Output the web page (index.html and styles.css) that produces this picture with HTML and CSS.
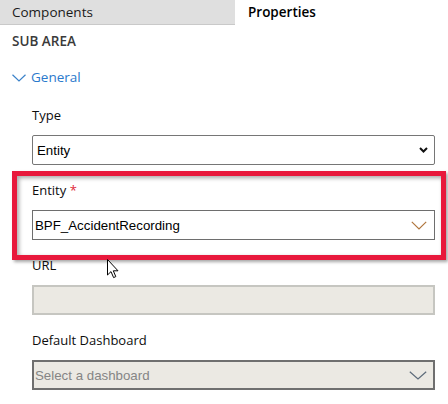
FILE: index.html
```html
<!DOCTYPE html>
<html>
<head>
<meta charset="utf-8">
<link rel="stylesheet" href="styles.css">
</head>
<body>
<div class="page">
  <div class="tabs">
    <div class="tab tab-inactive">Components</div>
    <div class="tab tab-active">Properties</div>
  </div>
  <div class="heading">SUB AREA</div>
  <div class="group-toggle">
    <svg class="group-chevron" width="14" height="8" viewBox="0 0 14 8"><path d="M0.5 0.8 L7 7 L13.5 0.8" fill="none" stroke="#3b82c9" stroke-width="1.2"/></svg>
    <span>General</span>
  </div>
  <div class="fields">
    <div class="field">
      <div class="label">Type</div>
      <div class="select select-native">
        <span class="value">Entity</span>
        <svg width="9" height="6" viewBox="0 0 9 6"><path d="M1 1 L4.5 4.5 L8 1" fill="none" stroke="#111" stroke-width="2"/></svg>
      </div>
    </div>
    <div class="field">
      <div class="label">Entity <span class="req">*</span></div>
      <div class="select select-fluent">
        <span class="value">BPF_AccidentRecording</span>
        <svg width="16" height="9" viewBox="0 0 16 9"><path d="M0.8 0.8 L8 8 L15.2 0.8" fill="none" stroke="#b0763e" stroke-width="1.2"/></svg>
      </div>
    </div>
    <div class="field">
      <div class="label">URL</div>
      <div class="input-disabled"></div>
    </div>
    <div class="field">
      <div class="label">Default Dashboard</div>
      <div class="select select-disabled">
        <span class="value placeholder">Select a dashboard</span>
        <svg width="18" height="9" viewBox="0 0 18 9"><path d="M0.8 0.8 L9 8 L17.2 0.8" fill="none" stroke="#5d6b7a" stroke-width="1.2"/></svg>
      </div>
    </div>
  </div>
  <div class="highlight"></div>
  <svg class="cursor" width="13" height="20" viewBox="0 0 13 20"><path d="M0.5 0.5 L0.5 16 L4 12.6 L6.6 18.6 L8.8 17.6 L6.3 11.8 L11 11.8 Z" fill="#fff" stroke="#000" stroke-width="1" stroke-linejoin="miter"/></svg>
</div>
</body>
</html>
```
FILE: styles.css
```css
html, body {
  margin: 0;
  padding: 0;
  background: #fff;
}
.page {
  position: relative;
  width: 448px;
  height: 404px;
  overflow: hidden;
  font-family: "Open Sans", "Noto Sans", sans-serif;
  color: #111;
}
.tabs {
  display: flex;
  height: 25px;
}
.tab {
  font-size: 13.5px;
  line-height: 24px;
}
.tab-inactive {
  width: 223px;
  padding-left: 12px;
  background: #dfdfdf;
  border-bottom: 1px solid #c9c9c9;
  color: #1a1a1a;
}
.tab-active {
  padding-left: 13px;
  font-weight: 600;
  color: #000;
}
.heading {
  margin: 6px 0 0 12px;
  font-size: 13.5px;
  line-height: 20px;
  font-weight: 600;
  color: #3a3a3a;
}
.group-toggle {
  display: flex;
  align-items: center;
  gap: 5px;
  margin: 16px 0 0 12px;
  height: 20px;
  font-size: 13.5px;
  color: #2b79cc;
}
.group-chevron {
  margin-top: 1px;
}
.fields {
  display: flex;
  flex-direction: column;
  gap: 15px;
  margin: 18px 13px 0 32px;
}
.field {
  display: flex;
  flex-direction: column;
}
.label {
  font-size: 13px;
  line-height: 20px;
  margin-bottom: 10px;
  color: #0d0d0d;
}
.req {
  color: #e0283a;
}
.select {
  box-sizing: border-box;
  height: 30px;
  display: flex;
  align-items: center;
  justify-content: space-between;
  font-family: "Liberation Sans", Arial, sans-serif;
  font-size: 13.3px;
  color: #000;
}
.select-native {
  border: 1px solid #767676;
  border-radius: 2px;
  padding: 0 6px 0 4px;
}
.select-fluent {
  border: 1px solid #6e6e6e;
  padding: 0 7px 0 2px;
}
.select-disabled {
  border: 2px solid #6f6f6f;
  background: #ebe9e3;
  padding: 0 6px 0 1px;
}
.placeholder {
  color: #858585;
}
.input-disabled {
  box-sizing: border-box;
  height: 30px;
  border: 2px solid #c6c6c1;
  background: #ebe9e3;
}
.highlight {
  position: absolute;
  left: 12px;
  top: 171px;
  width: 434px;
  height: 89px;
  box-sizing: border-box;
  border: 5px solid #e8193c;
  box-shadow: 2px 2px 3px rgba(0, 0, 0, 0.35), inset 2px 2px 4px rgba(0, 0, 0, 0.35);
}
.cursor {
  position: absolute;
  left: 107px;
  top: 259px;
}
```
